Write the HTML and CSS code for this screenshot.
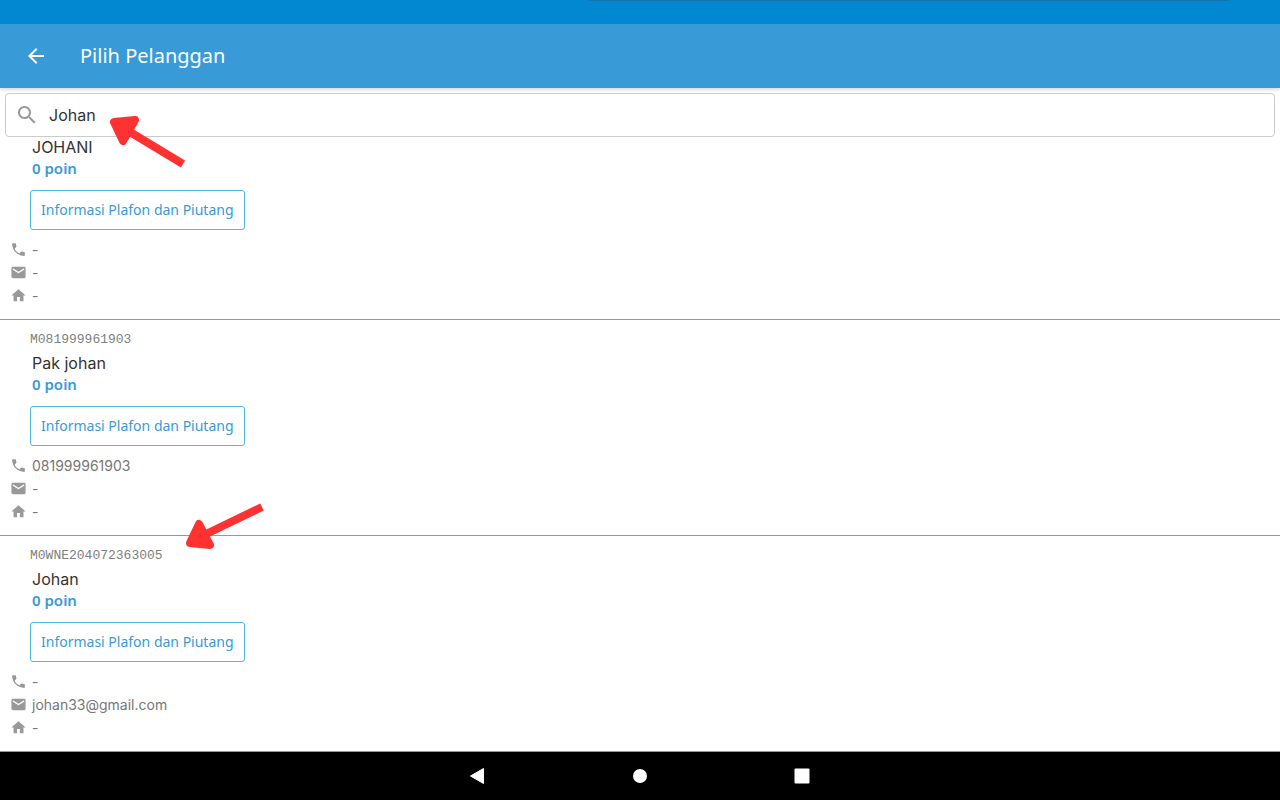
FILE: index.html
```html
<!DOCTYPE html>
<html lang="id">
<head>
<meta charset="utf-8">
<meta name="viewport" content="width=device-width, initial-scale=1">
<title>Pilih Pelanggan</title>
<link rel="stylesheet" href="styles.css">
</head>
<body>
<svg class="symbols" aria-hidden="true">
  <symbol id="phone" viewBox="0 0 24 24"><path d="M6.62 10.79c1.44 2.83 3.76 5.14 6.59 6.59l2.2-2.2c.27-.27.67-.36 1.02-.24 1.12.37 2.33.57 3.57.57.55 0 1 .45 1 1V20c0 .55-.45 1-1 1-9.39 0-17-7.61-17-17 0-.55.45-1 1-1h3.5c.55 0 1 .45 1 1 0 1.25.2 2.45.57 3.57.11.35.03.74-.25 1.02l-2.2 2.2z"/></symbol>
  <symbol id="mail" viewBox="0 0 24 24"><path d="M20 4H4c-1.1 0-1.99.9-1.99 2L2 18c0 1.1.9 2 2 2h16c1.1 0 2-.9 2-2V6c0-1.1-.9-2-2-2zm0 4l-8 5-8-5V6l8 5 8-5v2z"/></symbol>
  <symbol id="home" viewBox="0 0 24 24"><path d="M10 20v-6h4v6h5v-8h3L12 3 2 12h3v8z"/></symbol>
</svg>
<div class="screen">
  <div class="status-bar"><span class="status-edge"></span></div>
  <header class="app-bar">
    <button class="back" type="button" aria-label="Kembali">
      <svg viewBox="0 0 24 24"><path d="M20 11H7.83l5.59-5.59L12 4l-8 8 8 8 1.41-1.41L7.83 13H20v-2z"/></svg>
    </button>
    <h1 class="title">Pilih Pelanggan</h1>
  </header>
  <form class="search">
    <label class="search-box">
      <svg class="search-icon" viewBox="0 0 24 24" aria-hidden="true"><path d="M15.5 14h-.79l-.28-.27C15.41 12.59 16 11.11 16 9.5 16 5.91 13.09 3 9.5 3S3 5.91 3 9.5 5.91 16 9.5 16c1.61 0 3.09-.59 4.23-1.57l.27.28v.79l5 4.99L20.49 19l-4.99-5zm-6 0C7.01 14 5 11.99 5 9.5S7.01 5 9.5 5 14 7.01 14 9.5 11.99 14 9.5 14z"/></svg>
      <input class="search-input" type="text" value="Johan" aria-label="Cari pelanggan">
    </label>
  </form>
  <main class="list">
    <article class="customer">
      <h2 class="name">JOHANI</h2>
      <p class="points">0 poin</p>
      <button class="info" type="button">Informasi Plafon dan Piutang</button>
      <ul class="contacts">
        <li class="contact"><svg class="icon"><use href="#phone"/></svg><span>-</span></li>
        <li class="contact"><svg class="icon"><use href="#mail"/></svg><span>-</span></li>
        <li class="contact"><svg class="icon"><use href="#home"/></svg><span>-</span></li>
      </ul>
    </article>
    <article class="customer">
      <p class="code">M081999961903</p>
      <h2 class="name">Pak johan</h2>
      <p class="points">0 poin</p>
      <button class="info" type="button">Informasi Plafon dan Piutang</button>
      <ul class="contacts">
        <li class="contact"><svg class="icon"><use href="#phone"/></svg><span>081999961903</span></li>
        <li class="contact"><svg class="icon"><use href="#mail"/></svg><span>-</span></li>
        <li class="contact"><svg class="icon"><use href="#home"/></svg><span>-</span></li>
      </ul>
    </article>
    <article class="customer">
      <p class="code">M0WNE204072363005</p>
      <h2 class="name">Johan</h2>
      <p class="points">0 poin</p>
      <button class="info" type="button">Informasi Plafon dan Piutang</button>
      <ul class="contacts">
        <li class="contact"><svg class="icon"><use href="#phone"/></svg><span>-</span></li>
        <li class="contact"><svg class="icon"><use href="#mail"/></svg><span>johan33@gmail.com</span></li>
        <li class="contact"><svg class="icon"><use href="#home"/></svg><span>-</span></li>
      </ul>
    </article>
  </main>
  <nav class="nav-bar">
    <button class="nav-button" type="button" aria-label="Kembali"><svg viewBox="0 0 24 24"><path d="M4.500 12 17.500 4.500v15z" stroke="#fff" stroke-linejoin="round"/></svg></button>
    <button class="nav-button" type="button" aria-label="Beranda"><svg viewBox="0 0 24 24"><circle cx="12" cy="12" r="7"/></svg></button>
    <button class="nav-button" type="button" aria-label="Aplikasi terbaru"><svg viewBox="0 0 24 24"><rect x="4.500" y="4.500" width="15" height="15" rx="1"/></svg></button>
  </nav>
  <svg class="arrow arrow-search" viewBox="0 0 80 56" aria-hidden="true"><path class="head" d="M7 9 28 7 16 28z"/><path class="shaft" d="M18 16 76 51"/></svg>
  <svg class="arrow arrow-result" viewBox="0 0 84 50" aria-hidden="true"><path class="head" d="M8 42 17 23 28 44z"/><path class="shaft" d="M20 35 80 6"/></svg>
</div>
</body>
</html>
```
FILE: styles.css
```css
* { box-sizing: border-box; }

body {
  margin: 0;
  font-family: "Noto Sans", "Open Sans", sans-serif;
  color: #333;
  background: #fff;
}

button { padding: 0; border: 0; background: none; font: inherit; cursor: pointer; }
h1, h2, p, ul { margin: 0; padding: 0; font-weight: 400; }

.symbols { position: absolute; width: 0; height: 0; }

.screen {
  position: relative;
  display: flex;
  flex-direction: column;
  height: 100vh;
  overflow: hidden;
}

.status-bar { flex: none; height: 24px; background: #0288d1; }
.status-edge { display: block; width: 50%; height: 1px; margin-left: 46%; background: #1474ad; }

.app-bar {
  display: flex;
  flex: none;
  align-items: center;
  gap: 32px;
  height: 64px;
  padding: 0 24px;
  background: #389bd8;
  color: #fff;
  box-shadow: 0 2px 3px rgba(0, 0, 0, .14);
}
.back { width: 24px; height: 24px; }
.back svg { display: block; fill: #fff; }
.title { font-size: 20px; line-height: 28px; }

.search { flex: none; padding: 5px 5px 4px; }
.search-box {
  display: flex;
  align-items: center;
  gap: 10px;
  height: 44px;
  padding: 0 10px 0 9px;
  border: 1px solid #ccc;
  border-radius: 4px;
}
.search-icon { flex: none; width: 24px; height: 24px; fill: #999; }
.search-input {
  flex: 1;
  min-width: 0;
  padding: 0;
  border: 0;
  outline: 0;
  background: none;
  color: #333;
  font-family: Inter, sans-serif;
  font-size: 16px;
}

.list {
  display: flex;
  flex: 1;
  flex-direction: column;
  justify-content: flex-end;
  min-height: 0;
  overflow: hidden;
}
.customer { flex: none; padding: 9px 10px 12px; border-bottom: 1px solid #999; }
.code {
  padding-left: 20px;
  color: #808080;
  font-family: "Liberation Mono", monospace;
  font-size: 13px;
  line-height: 22px;
}
.name { padding-left: 22px; font-family: Inter, sans-serif; font-size: 16px; line-height: 24px; }
.points { padding-left: 22px; color: #389bd8; font-size: 15px; font-weight: 600; line-height: 18px; }
.info {
  display: block;
  height: 40px;
  margin: 13px 0 8px 20px;
  padding: 0 10px 2px;
  border: 1px solid #4fb9de;
  border-radius: 3px;
  color: #389bd8;
  font-size: 14px;
}
.contacts {
  list-style: none;
  color: #777;
  font-family: Inter, sans-serif;
  font-size: 14px;
  line-height: 23px;
}
.contact { display: flex; align-items: center; gap: 5px; }
.icon { width: 17px; height: 17px; fill: #999; }

.nav-bar {
  display: flex;
  flex: none;
  align-items: center;
  justify-content: center;
  gap: 138px;
  height: 48px;
  background: #000;
}
.nav-button { width: 24px; height: 24px; }
.nav-button svg { display: block; fill: #fff; }

.arrow { position: absolute; pointer-events: none; }
.arrow-search { top: 113px; left: 107px; width: 80px; height: 56px; }
.arrow-result { top: 501px; left: 182px; width: 84px; height: 50px; }
.head { fill: #ff3131; stroke: #ff3131; stroke-width: 8px; stroke-linejoin: round; }
.shaft { fill: none; stroke: #ff3131; stroke-width: 8px; }
```
